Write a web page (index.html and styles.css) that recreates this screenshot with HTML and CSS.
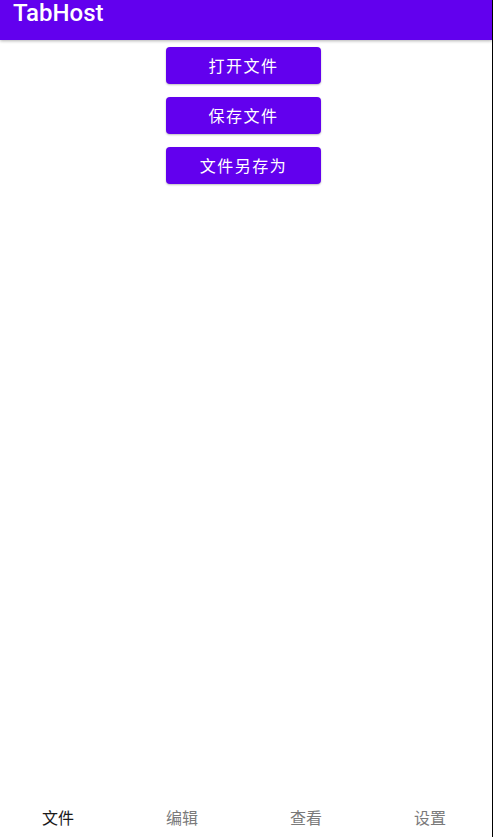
FILE: index.html
```html
<!DOCTYPE html>
<html lang="zh">
<head>
<meta charset="utf-8">
<link rel="stylesheet" href="styles.css">
</head>
<body>
<div class="screen">
  <header class="appbar"><span class="title">TabHost</span></header>
  <main class="content">
    <button class="btn">打开文件</button>
    <button class="btn">保存文件</button>
    <button class="btn">文件另存为</button>
  </main>
  <nav class="tabs">
    <div class="tab active">文件</div>
    <div class="tab">编辑</div>
    <div class="tab">查看</div>
    <div class="tab">设置</div>
  </nav>
</div>
</body>
</html>
```
FILE: styles.css
```css
html, body { margin: 0; padding: 0; }
body {
  width: 493px;
  height: 837px;
  overflow: hidden;
  background: #fff;
  font-family: Roboto, "Noto Sans CJK SC", sans-serif;
}
.screen {
  width: 492px;
  height: 837px;
  border-right: 1px solid #000;
  display: flex;
  flex-direction: column;
}
.appbar {
  height: 40px;
  background: #6200ee;
  box-shadow: 0 1px 3px rgba(0,0,0,0.3);
  padding-left: 13px;
  position: relative;
  z-index: 1;
}
.title {
  color: #fff;
  font-size: 24px;
  font-weight: 500;
  line-height: 26px;
  display: block;
}
.content {
  flex: 1;
  display: flex;
  flex-direction: column;
  align-items: center;
  padding-top: 7px;
  padding-right: 5px;
  gap: 13px;
}
.btn {
  width: 155px;
  height: 37px;
  border: none;
  border-radius: 4px;
  background: #6200ee;
  color: #fff;
  font-family: Roboto, "Noto Sans CJK SC", sans-serif;
  font-size: 16px;
  line-height: 20px;
  letter-spacing: 1.5px;
  box-shadow: 0 1px 2px rgba(0,0,0,0.25);
  padding: 3px 0 0 0;
}
.tabs {
  height: 48px;
  margin-left: -4px;
  display: grid;
  grid-template-columns: repeat(4, 1fr);
  align-items: center;
  padding-top: 8px;
  box-sizing: border-box;
}
.tab {
  text-align: center;
  font-size: 16px;
  color: #7a7a7a;
  font-family: "Noto Sans CJK SC", sans-serif;
}
.tab.active { color: #1a1a1a; }
```
